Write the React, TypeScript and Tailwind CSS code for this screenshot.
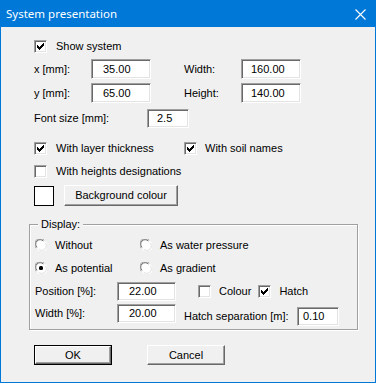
import React from "react";

const font = { fontFamily: '"Liberation Sans", Arial, sans-serif' };

function Check({ checked = false }: { checked?: boolean }) {
  return (
    <span className="relative inline-block w-[13px] h-[13px] shrink-0 border border-t-[#a0a0a0] border-l-[#a0a0a0] border-r-white border-b-white bg-white shadow-[inset_1px_1px_0_#696969,inset_-1px_-1px_0_#e3e3e3]">
      {checked && (
        <svg className="absolute left-[2px] top-[2px]" width="7" height="7" viewBox="0 0 7 7">
          <path d="M0 2h1v1h1v1h1V3h1V2h1V1h1V0h1v3H6v1H5v1H4v1H3v1H2V6H1V5H0z" fill="#000" />
        </svg>
      )}
    </span>
  );
}

function Radio({ checked = false }: { checked?: boolean }) {
  return (
    <svg width="12" height="12" viewBox="0 0 12 12" className="shrink-0">
      <circle cx="6" cy="6" r="5.5" fill="#fff" />
      <path d="M1.2 9.2A5.5 5.5 0 0 1 9.2 1.2" fill="none" stroke="#a0a0a0" strokeWidth="1" />
      <path d="M2 8.4A4.5 4.5 0 0 1 8.4 2" fill="none" stroke="#696969" strokeWidth="1" />
      <path d="M10.8 2.8A5.5 5.5 0 0 1 2.8 10.8" fill="none" stroke="#fff" strokeWidth="1" />
      <path d="M10 3.6A4.5 4.5 0 0 1 3.6 10" fill="none" stroke="#e3e3e3" strokeWidth="1" />
      {checked && <rect x="4" y="4" width="4" height="4" rx="1.5" fill="#000" />}
    </svg>
  );
}

function Field({ value, w, h = 20, pl }: { value: string; w: number; h?: number; pl: number }) {
  return (
    <div
      className="flex items-center shrink-0 bg-white border border-t-[#a0a0a0] border-l-[#a0a0a0] border-r-white border-b-white shadow-[inset_1px_1px_0_#696969,inset_-1px_-1px_0_#e3e3e3] text-[11px] text-black"
      style={{ width: w, height: h, paddingLeft: pl }}
    >
      {value}
    </div>
  );
}

function Button({ label, def = false, w, h = 20 }: { label: string; def?: boolean; w: number; h?: number }) {
  return (
    <div
      className={`flex items-center justify-center shrink-0 bg-[#f0f0f0] text-[11px] text-black ${
        def ? "border border-black" : ""
      }`}
      style={{ width: w, height: h }}
    >
      <div className="flex items-center justify-center w-full h-full border border-t-white border-l-white border-r-[#696969] border-b-[#696969] shadow-[inset_-1px_-1px_0_#a0a0a0]">
        {label}
      </div>
    </div>
  );
}

export default function App() {
  return (
    <div
      className="w-[376px] h-[383px] border border-[#0078d7] bg-[#f0f0f0] flex flex-col text-[11px] text-black whitespace-nowrap"
      style={font}
    >
      {/* title bar */}
      <div className="h-[26px] bg-[#0078d7] flex items-center justify-between pl-[5px] pr-[9px]">
        <span className="text-white text-[11.5px]" style={{ fontFamily: '"Noto Sans", "Open Sans", sans-serif' }}>
          System presentation
        </span>
        <svg width="11" height="11" viewBox="0 0 11 11">
          <path d="M0.5 0.5L10.5 10.5M10.5 0.5L0.5 10.5" stroke="#fff" strokeWidth="1.1" />
        </svg>
      </div>

      <div className="flex flex-col pl-[33px]">
        <div className="mt-[13px] h-[13px] flex items-center gap-[9px]">
          <Check checked />
          <span>Show system</span>
        </div>

        <div className="mt-[6px] h-[20px] flex items-center">
          <span className="w-[57px]">x [mm]:</span>
          <Field value="35.00" w={60} pl={11} />
          <span className="ml-[33px] w-[57px]">Width:</span>
          <Field value="160.00" w={60} pl={9} />
        </div>

        <div className="mt-[4px] h-[20px] flex items-center">
          <span className="w-[57px]">y [mm]:</span>
          <Field value="65.00" w={60} pl={11} />
          <span className="ml-[33px] w-[57px]">Height:</span>
          <Field value="140.00" w={60} pl={9} />
        </div>

        <div className="mt-[6px] h-[19px] flex items-center">
          <span className="w-[113px]">Font size [mm]:</span>
          <Field value="2.5" w={42} h={19} pl={9} />
        </div>

        <div className="mt-[14px] h-[13px] flex items-center">
          <div className="w-[150px] flex items-center gap-[9px]">
            <Check checked />
            <span>With layer thickness</span>
          </div>
          <div className="flex items-center gap-[8px]">
            <Check checked />
            <span>With soil names</span>
          </div>
        </div>

        <div className="mt-[10px] h-[13px] flex items-center gap-[9px]">
          <Check />
          <span>With heights designations</span>
        </div>

        <div className="mt-[7px] h-[21px] flex items-center gap-[10px]">
          <div className="w-[20px] h-[20px] border border-black bg-white" />
          <Button label="Background colour" w={114} h={21} />
        </div>

        {/* Display group */}
        <div className="relative mt-[18px] -ml-[5px] w-[329px] h-[106px] border border-[#a0a0a0] shadow-[inset_1px_1px_0_#fff,1px_1px_0_#fff] pl-[5px] flex flex-col">
          <span className="absolute -top-[8px] left-[8px] px-[3px] bg-[#f0f0f0] leading-[14px]">Display:</span>

          <div className="mt-[14px] h-[12px] flex items-center">
            <div className="w-[105px] flex items-center gap-[8px]">
              <Radio />
              <span>Without</span>
            </div>
            <div className="flex items-center gap-[8px]">
              <Radio />
              <span>As water pressure</span>
            </div>
          </div>

          <div className="mt-[11px] h-[12px] flex items-center">
            <div className="w-[105px] flex items-center gap-[8px]">
              <Radio checked />
              <span>As potential</span>
            </div>
            <div className="flex items-center gap-[8px]">
              <Radio />
              <span>As gradient</span>
            </div>
          </div>

          <div className="mt-[8px] h-[19px] flex items-center">
            <span className="w-[82px]">Position [%]:</span>
            <Field value="22.00" w={59} h={19} pl={11} />
            <div className="ml-[22px] flex items-center gap-[8px]">
              <Check />
              <span>Colour</span>
            </div>
            <div className="ml-[7px] flex items-center gap-[8px]">
              <Check checked />
              <span>Hatch</span>
            </div>
          </div>

          <div className="mt-[3px] flex items-start">
            <div className="h-[19px] flex items-center">
              <span className="w-[82px]">Width [%]:</span>
              <Field value="20.00" w={59} h={19} pl={11} />
            </div>
            <div className="mt-[3px] ml-[8px] h-[19px] flex items-center">
              <span className="w-[113px]">Hatch separation [m]:</span>
              <Field value="0.10" w={42} h={19} pl={5} />
            </div>
          </div>
        </div>

        <div className="mt-[15px] flex items-center gap-[35px]">
          <Button label="OK" def w={78} h={20} />
          <Button label="Cancel" w={78} h={20} />
        </div>
      </div>
    </div>
  );
}
